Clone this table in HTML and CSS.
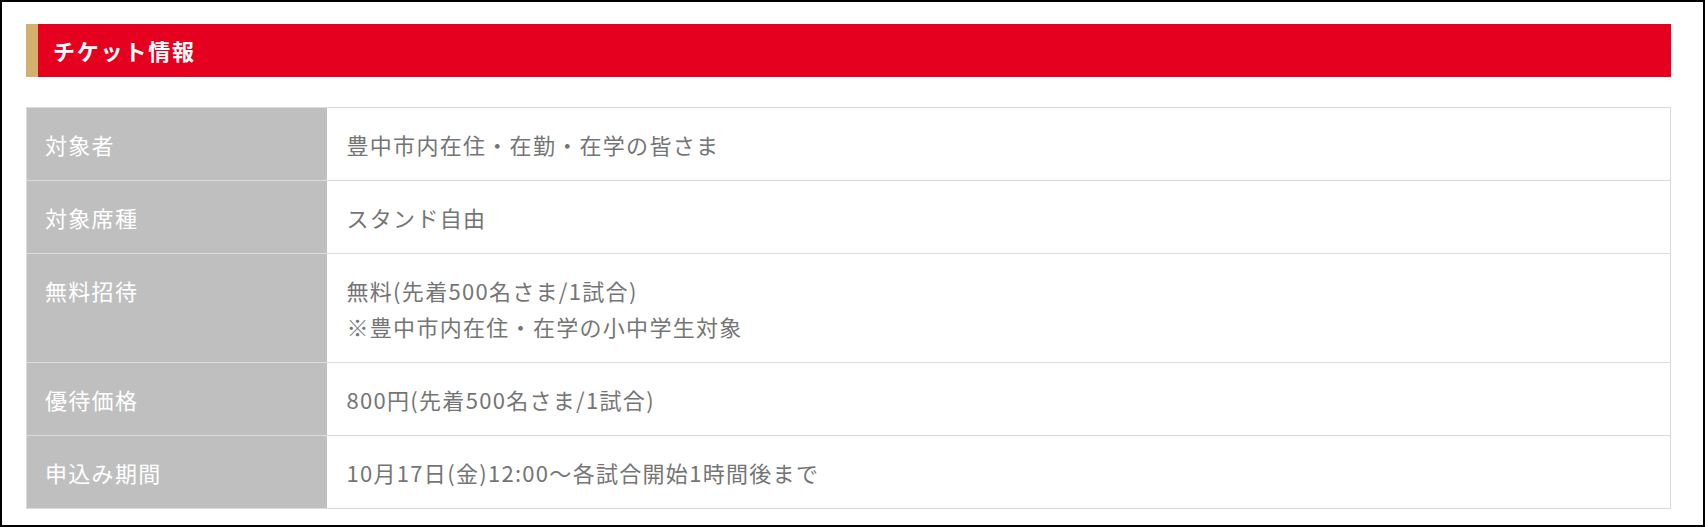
FILE: index.html
```html
<!DOCTYPE html>
<html lang="ja">
<head>
<meta charset="utf-8">
<link rel="stylesheet" href="styles.css">
</head>
<body>
<div class="frame">
  <section class="ticket">
    <h2 class="heading">チケット情報</h2>
    <table class="info">
      <tr><th>対象者</th><td>豊中市内在住・在勤・在学の皆さま</td></tr>
      <tr><th>対象席種</th><td>スタンド自由</td></tr>
      <tr><th>無料招待</th><td>無料(先着500名さま/1試合)<br>※豊中市内在住・在学の小中学生対象</td></tr>
      <tr><th>優待価格</th><td>800円(先着500名さま/1試合)</td></tr>
      <tr><th>申込み期間</th><td>10月17日(金)12:00～各試合開始1時間後まで</td></tr>
    </table>
  </section>
</div>
</body>
</html>
```

FILE: styles.css
```css
* { box-sizing: border-box; }
html, body { margin: 0; padding: 0; background: #fff; }
body { font-family: "Noto Sans CJK JP", "Noto Sans", sans-serif; }
.frame {
  width: 1705px;
  height: 527px;
  border: 2px solid #000;
  padding: 22px 32px 0 24px;
}
.heading {
  margin: 0;
  height: 53px;
  background: #e60020;
  border-left: 12px solid #d4b06e;
  color: #fff;
  font-size: 22px;
  font-weight: 700;
  line-height: 53px;
  padding-left: 15px;
  letter-spacing: 1.8px;
}
.info {
  margin-top: 30px;
  width: 100%;
  border-collapse: collapse;
  border: 1px solid #dcdcdc;
}
.info th, .info td {
  border-top: 1px solid #dcdcdc;
  font-size: 22px;
  line-height: 36px;
  letter-spacing: 1.3px;
  padding: 18px 20px 18px 20px;
  vertical-align: top;
  text-align: left;
  font-weight: 400;
}
.info th {
  width: 300px;
  background: #bfbfbf;
  color: #fff;
  padding-left: 18px;
}
.info td {
  color: #757575;
  background: #fff;
}
```
